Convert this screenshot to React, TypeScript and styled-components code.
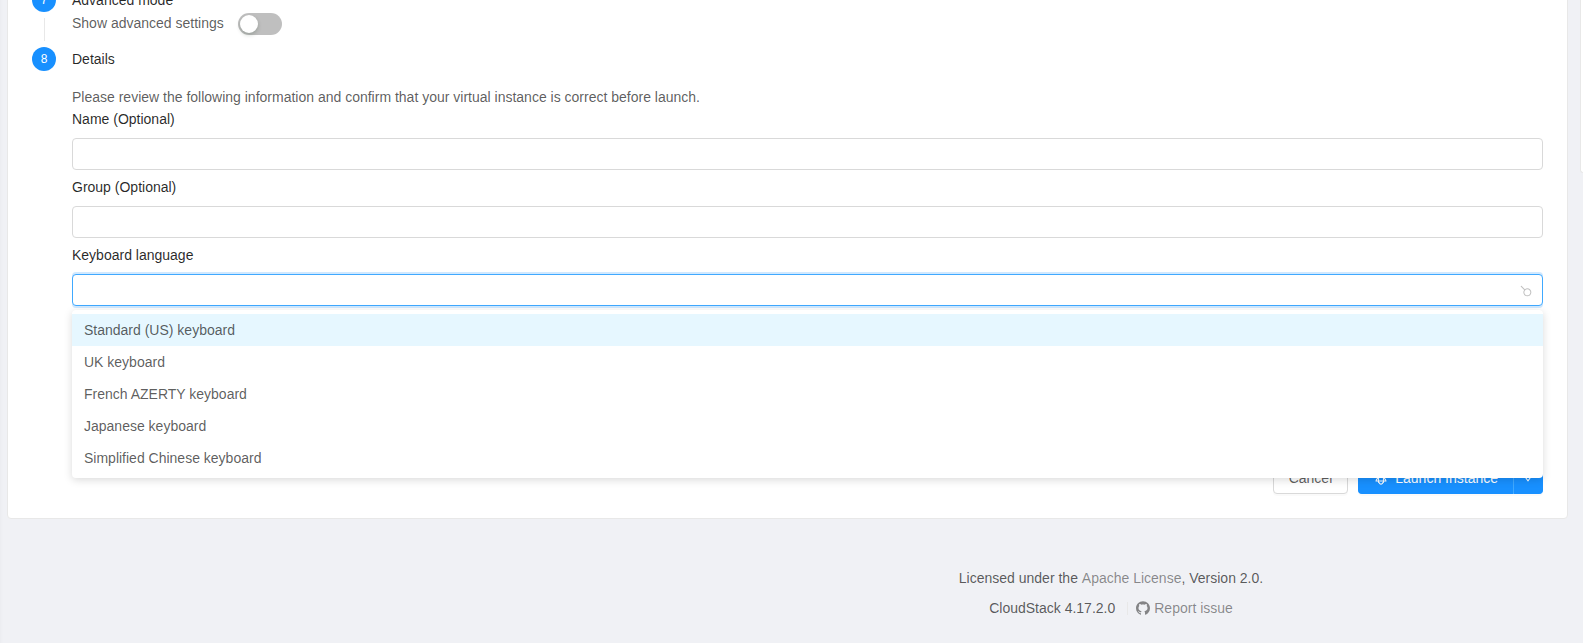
import React, { useState } from 'react';
import styled, { createGlobalStyle } from 'styled-components';
import { AiOutlineDown, AiOutlineGithub, AiOutlineRocket, AiOutlineSearch } from 'react-icons/ai';

const GlobalStyle = createGlobalStyle`
  *, *::before, *::after { box-sizing: border-box; }
  body {
    margin: 0;
    overflow: hidden;
    background: #f0f1f5;
    color: rgba(0, 0, 0, 0.65);
    font-family: "Liberation Sans", Arial, sans-serif;
    font-size: 14px;
    line-height: 22px;
  }
  button, input, select { font: inherit; color: inherit; }
`;

const Page = styled.div`
  display: flex;
  flex-direction: column;
  min-height: 100vh;
  box-shadow: inset 4px 0 4px -4px rgba(0, 21, 41, 0.04);
`;

const Columns = styled.main`
  display: grid;
  grid-template-columns: minmax(0, 1fr) 3px;
  column-gap: 12px;
  align-items: start;
  padding-left: 7px;
`;

const Card = styled.section`
  margin-top: -37px;
  padding: 24px;
  background: #fff;
  border: 1px solid #e8e8e8;
  border-radius: 4px;
`;

const SideCard = styled.aside`
  height: 173px;
  background: #fff;
  border: solid #e8e8e8;
  border-width: 0 0 1px 1px;
  border-radius: 0 0 0 4px;
`;

const Steps = styled.ol`
  margin: 0;
  padding: 0;
  list-style: none;
`;

const Step = styled.li`
  display: grid;
  grid-template-columns: 24px minmax(0, 1fr);
  column-gap: 16px;
`;

const StepTrack = styled.div`
  display: flex;
  flex-direction: column;
  align-items: center;
`;

const StepNumber = styled.span`
  width: 24px;
  height: 24px;
  border-radius: 50%;
  background: #1890ff;
  color: #fff;
  font-size: 12px;
  line-height: 24px;
  text-align: center;
`;

const StepTail = styled.span`
  flex: 1;
  width: 1px;
  margin: 6px 0;
  background: #e8e8e8;
`;

const StepTitle = styled.h3`
  margin: 0;
  color: rgba(0, 0, 0, 0.85);
  font-size: 14px;
  font-weight: 400;
  line-height: 24px;
`;

const SwitchRow = styled.label`
  display: flex;
  align-items: flex-start;
  gap: 14px;
  height: 35px;
`;

const Switch = styled.input`
  appearance: none;
  width: 44px;
  height: 22px;
  margin: 1px 0 0;
  padding: 2px;
  border-radius: 11px;
  background: rgba(0, 0, 0, 0.25);
  cursor: pointer;

  &::before {
    content: '';
    display: block;
    width: 18px;
    height: 18px;
    border-radius: 50%;
    background: #fff;
    box-shadow: 0 2px 4px rgba(0, 35, 11, 0.2);
  }
  &:checked { background: #1890ff; }
  &:checked::before { margin-left: 22px; }
`;

const Intro = styled.p`
  margin: 15px 0 0;
`;

const Fields = styled.div`
  display: flex;
  flex-direction: column;
  gap: 6px;
`;

const Field = styled.div`
  position: relative;
  display: flex;
  flex-direction: column;
  gap: 8px;
`;

const FieldLabel = styled.label`
  color: rgba(0, 0, 0, 0.85);
`;

const TextInput = styled.input`
  width: 100%;
  height: 32px;
  padding: 4px 11px;
  border: 1px solid #d9d9d9;
  border-radius: 4px;
  background: #fff;
  outline: none;
  &:focus { border-color: #40a9ff; }
`;

const SelectBox = styled.div`
  display: grid;
  align-items: center;

  > * { grid-area: 1 / 1; }
  > svg {
    justify-self: end;
    margin: 2px 11px 0;
    color: rgba(0, 0, 0, 0.25);
    transform: rotate(180deg);
    pointer-events: none;
  }
`;

const Select = styled.select`
  appearance: none;
  width: 100%;
  height: 32px;
  padding: 4px 11px;
  border: 1px solid #40a9ff;
  border-radius: 4px;
  background: #fff;
  box-shadow: 0 -2px 0 rgba(24, 144, 255, 0.2), 0 2px 0 rgba(24, 144, 255, 0.2);
  outline: none;
`;

const Menu = styled.ul`
  position: absolute;
  z-index: 1;
  top: 100%;
  left: 0;
  right: 0;
  margin: 4px 0 0;
  padding: 4px 0;
  border-radius: 4px;
  background: #fff;
  box-shadow: 0 2px 8px rgba(0, 0, 0, 0.15);
  list-style: none;
`;

const MenuItem = styled.li<{ $active: boolean }>`
  padding: 5px 12px;
  background: ${({ $active }) => ($active ? '#e6f7ff' : 'transparent')};
  cursor: pointer;
`;

const Actions = styled.div`
  display: flex;
  justify-content: flex-end;
  gap: 10px;
  margin-top: 156px;
`;

const Button = styled.button<{ $primary?: boolean }>`
  display: inline-flex;
  align-items: center;
  gap: 7px;
  height: 32px;
  padding: 0 15px;
  border: 1px solid ${({ $primary }) => ($primary ? '#1890ff' : '#d9d9d9')};
  border-radius: 4px;
  background: ${({ $primary }) => ($primary ? '#1890ff' : '#fff')};
  color: ${({ $primary }) => ($primary ? '#fff' : 'inherit')};
  box-shadow: 0 2px 0 rgba(0, 0, 0, 0.02);
  cursor: pointer;
`;

const ButtonGroup = styled.div`
  display: flex;

  > button:first-child {
    border-right-color: #40a9ff;
    border-radius: 4px 0 0 4px;
  }
  > button:last-child {
    padding: 0 8px;
    border-left-width: 0;
    border-radius: 0 4px 4px 0;
  }
`;

const Footer = styled.footer`
  display: flex;
  flex-direction: column;
  align-items: center;
  gap: 8px;
  margin-top: 48px;
  padding-left: 639px;
`;

const FooterLine = styled.div`
  display: flex;
  align-items: center;
  white-space: pre;
`;

const FooterLink = styled.a`
  display: inline-flex;
  align-items: center;
  gap: 4px;
  color: rgba(0, 0, 0, 0.45);
  text-decoration: none;
`;

const Divider = styled.span`
  width: 1px;
  height: 13px;
  margin: 0 8px 0 12px;
  background: #e8e8e8;
`;

const glyphBox = '64 64 896 896';

const keyboards = [
  'Standard (US) keyboard',
  'UK keyboard',
  'French AZERTY keyboard',
  'Japanese keyboard',
  'Simplified Chinese keyboard',
];

export default function App() {
  const [keyboard, setKeyboard] = useState('');
  const [active, setActive] = useState(0);

  return (
    <>
      <GlobalStyle />
      <Page>
        <Columns>
          <Card>
            <Steps>
              <Step>
                <StepTrack>
                  <StepNumber>7</StepNumber>
                  <StepTail />
                </StepTrack>
                <div>
                  <StepTitle>Advanced mode</StepTitle>
                  <SwitchRow>
                    Show advanced settings
                    <Switch type="checkbox" role="switch" />
                  </SwitchRow>
                </div>
              </Step>
              <Step>
                <StepTrack>
                  <StepNumber>8</StepNumber>
                </StepTrack>
                <div>
                  <StepTitle>Details</StepTitle>
                  <Intro>
                    Please review the following information and confirm that your virtual instance is
                    correct before launch.
                  </Intro>
                  <Fields>
                    <Field>
                      <FieldLabel htmlFor="name">Name (Optional)</FieldLabel>
                      <TextInput id="name" type="text" />
                    </Field>
                    <Field>
                      <FieldLabel htmlFor="group">Group (Optional)</FieldLabel>
                      <TextInput id="group" type="text" />
                    </Field>
                    <Field>
                      <FieldLabel htmlFor="keyboard">Keyboard language</FieldLabel>
                      <SelectBox>
                        <Select
                          id="keyboard"
                          value={keyboard}
                          onChange={(event) => setKeyboard(event.target.value)}
                        >
                          <option value="" />
                          {keyboards.map((name) => (
                            <option key={name}>{name}</option>
                          ))}
                        </Select>
                        <AiOutlineSearch size={12} viewBox={glyphBox} />
                      </SelectBox>
                      <Menu role="listbox" aria-label="Keyboard language">
                        {keyboards.map((name, index) => (
                          <MenuItem
                            key={name}
                            role="option"
                            aria-selected={keyboard === name}
                            $active={index === active}
                            onMouseEnter={() => setActive(index)}
                            onClick={() => setKeyboard(name)}
                          >
                            {name}
                          </MenuItem>
                        ))}
                      </Menu>
                    </Field>
                  </Fields>
                </div>
              </Step>
            </Steps>
            <Actions>
              <Button type="button">Cancel</Button>
              <ButtonGroup>
                <Button type="button" $primary>
                  <AiOutlineRocket size={14} viewBox={glyphBox} />
                  Launch Instance
                </Button>
                <Button type="button" $primary aria-label="More launch options">
                  <AiOutlineDown size={12} viewBox={glyphBox} />
                </Button>
              </ButtonGroup>
            </Actions>
          </Card>
          <SideCard />
        </Columns>
        <Footer>
          <FooterLine>
            Licensed under the <FooterLink href="#license">Apache License</FooterLink>, Version 2.0.
          </FooterLine>
          <FooterLine>
            CloudStack 4.17.2.0
            <Divider />
            <FooterLink href="#issues">
              <AiOutlineGithub size={14} viewBox={glyphBox} />
              Report issue
            </FooterLink>
          </FooterLine>
        </Footer>
      </Page>
    </>
  );
}
